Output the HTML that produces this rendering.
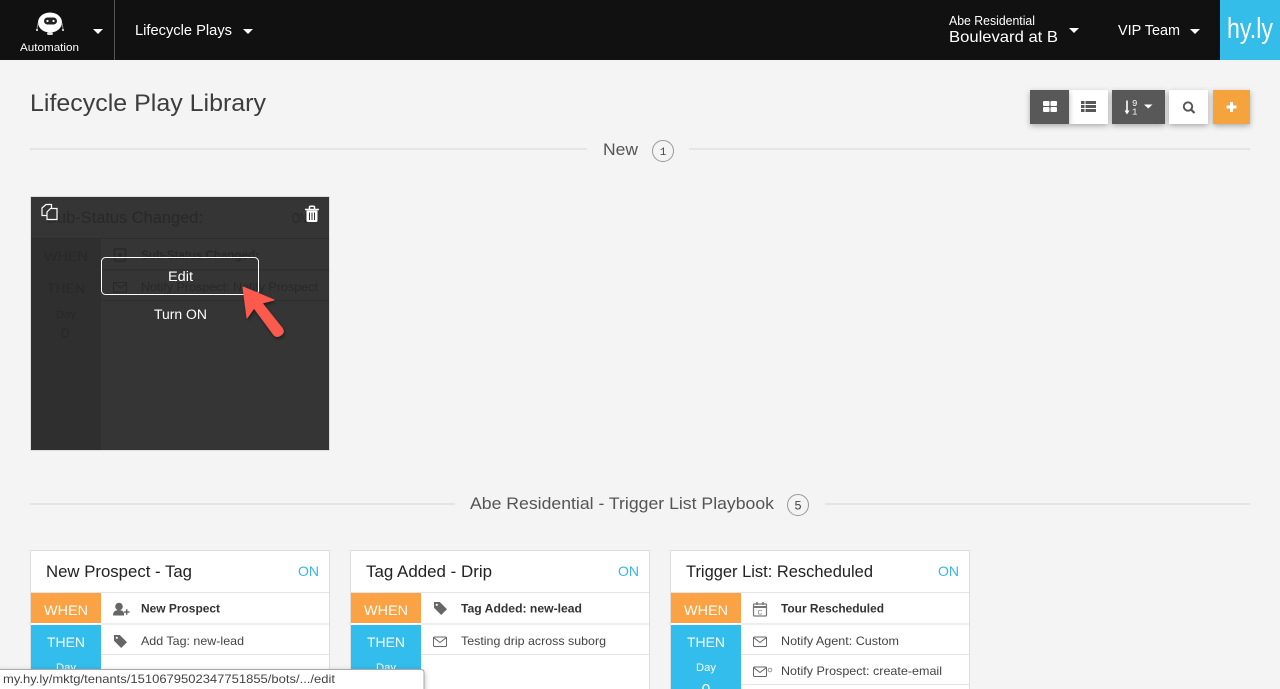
<!DOCTYPE html>
<html lang="en">
<head>
<meta charset="utf-8">
<title>Lifecycle Play Library</title>
<style>
html,body{margin:0;padding:0;background:#f4f4f4;width:1280px;height:689px;overflow:hidden}
svg{display:block}
text{font-family:"Liberation Sans",sans-serif}
</style>
</head>
<body>
<svg width="1280" height="689" viewBox="0 0 1280 689" xmlns="http://www.w3.org/2000/svg">
<defs>
<filter id="sh" x="-30%" y="-30%" width="160%" height="170%"><feDropShadow dx="0" dy="2" stdDeviation="3" flood-color="#000" flood-opacity=".3"/></filter>
<filter id="ash" x="-30%" y="-30%" width="160%" height="160%"><feDropShadow dx="1" dy="2" stdDeviation="1.5" flood-color="#000" flood-opacity=".45"/></filter>
<g id="mail" fill="none" stroke="#666" stroke-width="1"><rect x=".5" y=".5" width="13" height="9.500" rx="1"/><path d="M.8 1.200 7 6 13.200 1.200"/></g>
<path id="tag" fill="#666" d="M0 0H5.800L13 7.200 7.200 13 0 5.800ZM2.800 1.700a1.100 1.100 0 1 0 .01 0Z"/>
</defs>

<rect width="1280" height="689" fill="#f4f4f4"/>

<!-- Top bar -->
<rect width="1280" height="60" fill="#111"/>
<rect x="114" y="0" width="1" height="60" fill="#555"/>
<rect x="1220" y="0" width="60" height="60" fill="#35bdea"/>

<!-- Robot -->
<ellipse cx="50" cy="22.500" rx="12" ry="10" fill="#fff"/>
<rect x="44" y="17.500" width="13" height="7" rx="3.500" fill="#222"/>
<circle cx="47.500" cy="21" r="1.100" fill="#fff"/><circle cx="53.500" cy="21" r="1.100" fill="#fff"/>
<rect x="47" y="32.500" width="6" height="2.500" rx="1.200" fill="#ddd"/>
<path d="M38 23 37 29M62 23 63 29" stroke="#888" fill="none"/>
<circle cx="37" cy="30" r="1" fill="#fff"/><circle cx="63" cy="30" r="1" fill="#fff"/>
<text x="20" y="51" font-size="11" fill="#fff" textLength="59" lengthAdjust="spacingAndGlyphs">Automation</text>
<path d="M93 29h10l-5 5z" fill="#fff"/>

<text x="135" y="35" font-size="14.500" fill="#fff" textLength="97" lengthAdjust="spacingAndGlyphs">Lifecycle Plays</text>
<path d="M243 29h10l-5 5z" fill="#fff"/>

<text x="949" y="25" font-size="12.500" fill="#fff" textLength="86" lengthAdjust="spacingAndGlyphs">Abe Residential</text>
<text x="949" y="42" font-size="16" fill="#fff" textLength="109" lengthAdjust="spacingAndGlyphs">Boulevard at B</text>
<path d="M1069 28h10l-5 5z" fill="#fff"/>
<text x="1118" y="35" font-size="14.500" fill="#fff" textLength="62" lengthAdjust="spacingAndGlyphs">VIP Team</text>
<path d="M1190 29h10l-5 5z" fill="#fff"/>
<text x="1227" y="38" font-size="29" fill="#fff" textLength="46" lengthAdjust="spacingAndGlyphs">hy.ly</text>

<!-- Title -->
<text x="30" y="111" font-size="24" fill="#3d3d3d" textLength="236" lengthAdjust="spacingAndGlyphs">Lifecycle Play Library</text>

<!-- Toolbar -->
<g filter="url(#sh)"><rect x="1069" y="90" width="39" height="34" fill="#fff"/></g>
<g filter="url(#sh)"><rect x="1030" y="90" width="39" height="34" fill="#585858"/></g>
<g filter="url(#sh)"><rect x="1112" y="90" width="53" height="34" fill="#585858"/></g>
<g filter="url(#sh)"><rect x="1169" y="90" width="39" height="34" fill="#fff"/></g>
<g filter="url(#sh)"><rect x="1213" y="90" width="37" height="34" fill="#f4a33d"/></g>
<g fill="#fff"><rect x="1043" y="101" width="6.500" height="5" rx="1"/><rect x="1050.500" y="101" width="6.500" height="5" rx="1"/><rect x="1043" y="107" width="6.500" height="5" rx="1"/><rect x="1050.500" y="107" width="6.500" height="5" rx="1"/></g>
<g fill="#585858"><rect x="1081" y="101" width="3.500" height="3" /><rect x="1085.500" y="101" width="10.500" height="3"/><rect x="1081" y="105" width="3.500" height="3"/><rect x="1085.500" y="105" width="10.500" height="3"/><rect x="1081" y="109" width="3.500" height="3"/><rect x="1085.500" y="109" width="10.500" height="3"/></g>
<path d="M1127 100.500v11" stroke="#fff" stroke-width="1.600" fill="none"/><path d="M1124.500 110.500h5l-2.500 4z" fill="#fff"/>
<text x="1132" y="106" font-size="9" fill="#fff" style="font-family:'Liberation Mono',monospace">9</text>
<text x="1132" y="114.500" font-size="9" fill="#fff" style="font-family:'Liberation Mono',monospace">1</text>
<path d="M1144 104.500h8.500l-4.250 4z" fill="#fff"/>
<circle cx="1188" cy="106.500" r="4.200" fill="none" stroke="#555" stroke-width="1.900"/><path d="M1191 109.500l3.500 3.500" stroke="#555" stroke-width="2.200"/>
<path d="M1231.500 102v10M1226.500 107h10" stroke="#fff" stroke-width="3"/>

<!-- Section: New -->
<rect x="30" y="148" width="557" height="2" fill="#e3e5e8"/>
<rect x="689" y="148" width="561" height="2" fill="#e3e5e8"/>
<text x="603" y="155" font-size="16.500" fill="#555" textLength="35" lengthAdjust="spacingAndGlyphs">New</text>
<circle cx="663" cy="151" r="10.500" fill="none" stroke="#999"/>
<text x="663" y="155" font-size="11" fill="#444" text-anchor="middle" style="font-family:'Liberation Mono',monospace">1</text>

<!-- Hovered card -->
<rect x="30.500" y="196.500" width="299" height="254" fill="#353535" stroke="#ddd"/>
<rect x="31" y="238" width="70" height="212" fill="#2f2f2f"/>
<rect x="31" y="238" width="298" height="1" fill="#2d2d2d"/>
<rect x="101" y="269" width="228" height="1.500" fill="#2e2e2e"/>
<rect x="101" y="300" width="228" height="1" fill="#2e2e2e"/>
<g fill="#282828">
<text x="46" y="223" font-size="16.500" textLength="157" lengthAdjust="spacingAndGlyphs">Sub-Status Changed:</text>
<text x="292" y="223" font-size="15" textLength="15" lengthAdjust="spacingAndGlyphs">ON</text>
<text x="44" y="261" font-size="14" textLength="44" lengthAdjust="spacingAndGlyphs">WHEN</text>
<text x="47" y="293" font-size="14" textLength="38" lengthAdjust="spacingAndGlyphs">THEN</text>
<text x="56" y="318" font-size="11" textLength="20" lengthAdjust="spacingAndGlyphs">Day</text>
<text x="61" y="338" font-size="15">0</text>
<text x="141" y="259" font-size="12" font-weight="bold" textLength="118" lengthAdjust="spacingAndGlyphs">Sub-Status Changed:</text>
<text x="141" y="291" font-size="12" textLength="177" lengthAdjust="spacingAndGlyphs">Notify Prospect: Notify Prospect</text>
</g>
<rect x="114.500" y="249" width="11" height="12" rx="1" fill="none" stroke="#282828" stroke-width="1.400"/><circle cx="120" cy="255" r="2" fill="#282828"/>
<rect x="113.500" y="282.500" width="13" height="9.500" fill="none" stroke="#282828"/><path d="M114 283l6.500 5 6.500-5" fill="none" stroke="#282828"/>

<!-- Copy icon -->
<path d="M42 208 46 204.500h5.500v11H42z" fill="none" stroke="#fff" stroke-width="1.200"/>
<path d="M47 212 50.500 208.500H57v11H47z" fill="#353535" stroke="#fff" stroke-width="1.200"/>
<!-- Trash icon -->
<path d="M305 209.500h14M309.500 209v-1.800q0-1 1-1h3q1 0 1 1v1.800" fill="none" stroke="#fff" stroke-width="1.500"/>
<path d="M306.500 210.500h11v10q0 1.500-1.500 1.500h-8q-1.500 0-1.500-1.500z" fill="#fff"/>
<path d="M309.500 212.500v7.500M312 212.500v7.500M314.500 212.500v7.500" stroke="#353535" stroke-width="1"/>

<rect x="101.500" y="257.500" width="157" height="37" rx="4" fill="none" stroke="#fff"/>
<text x="168" y="281" font-size="13.500" fill="#fff" textLength="25" lengthAdjust="spacingAndGlyphs">Edit</text>
<text x="154" y="319" font-size="13.500" fill="#fff" textLength="53" lengthAdjust="spacingAndGlyphs">Turn ON</text>

<!-- Arrow -->
<path filter="url(#ash)" fill="#fb5a4e" d="M243 287 274 300 262 303 282 328Q285 332 281 335 277 338 274 335L254 308 247 318Z" stroke="#fb5a4e" stroke-linejoin="round"/>

<!-- Section: Playbook -->
<rect x="30" y="503" width="425" height="2" fill="#e3e5e8"/>
<rect x="825" y="503" width="425" height="2" fill="#e3e5e8"/>
<text x="470" y="509" font-size="16.500" fill="#555" textLength="304" lengthAdjust="spacingAndGlyphs">Abe Residential - Trigger List Playbook</text>
<circle cx="798" cy="505" r="10.500" fill="none" stroke="#999"/>
<text x="798" y="509.500" font-size="12.500" fill="#444" text-anchor="middle" style="font-family:'Liberation Mono',monospace">5</text>

<!-- Card 1 -->
<g>
<rect x="30.500" y="550.500" width="299" height="150" fill="#fff" stroke="#ddd"/>
<rect x="31" y="592" width="298" height="1" fill="#e5e5e5"/>
<rect x="31" y="593" width="70" height="30" fill="#fba344"/>
<rect x="31" y="625" width="70" height="70" fill="#33bdec"/>
<rect x="101" y="623" width="228" height="2" fill="#eee"/>
<rect x="101" y="654" width="228" height="1" fill="#e5e5e5"/>
<text x="46" y="577" font-size="16.500" fill="#222" textLength="146" lengthAdjust="spacingAndGlyphs">New Prospect - Tag</text>
<text x="298" y="576" font-size="14" fill="#38b6e8" textLength="21" lengthAdjust="spacingAndGlyphs">ON</text>
<text x="44" y="615" font-size="14" fill="#fff" textLength="44" lengthAdjust="spacingAndGlyphs">WHEN</text>
<text x="47" y="647" font-size="14" fill="#fff" textLength="38" lengthAdjust="spacingAndGlyphs">THEN</text>
<text x="56" y="671" font-size="11" fill="#fff" textLength="20" lengthAdjust="spacingAndGlyphs">Day</text>
<text x="141" y="612.500" font-size="12" font-weight="bold" fill="#333" textLength="79" lengthAdjust="spacingAndGlyphs">New Prospect</text>
<text x="141" y="645" font-size="12" fill="#444" textLength="103" lengthAdjust="spacingAndGlyphs">Add Tag: new-lead</text>
<circle cx="119" cy="606.500" r="3.800" fill="#666"/><path d="M113 615.500q0-5.500 6-5.500 4 0 5 3v2.500z" fill="#666"/>
<path d="M124 612h5.500M126.700 609.300v5.400" stroke="#666" stroke-width="1.500"/>
<use href="#tag" x="114" y="635"/>
</g>

<!-- Card 2 -->
<g>
<rect x="350.500" y="550.500" width="299" height="150" fill="#fff" stroke="#ddd"/>
<rect x="351" y="592" width="298" height="1" fill="#e5e5e5"/>
<rect x="351" y="593" width="70" height="30" fill="#fba344"/>
<rect x="351" y="625" width="70" height="70" fill="#33bdec"/>
<rect x="421" y="623" width="228" height="2" fill="#eee"/>
<rect x="421" y="654" width="228" height="1" fill="#e5e5e5"/>
<text x="366" y="577" font-size="16.500" fill="#222" textLength="126" lengthAdjust="spacingAndGlyphs">Tag Added - Drip</text>
<text x="618" y="576" font-size="14" fill="#38b6e8" textLength="21" lengthAdjust="spacingAndGlyphs">ON</text>
<text x="364" y="615" font-size="14" fill="#fff" textLength="44" lengthAdjust="spacingAndGlyphs">WHEN</text>
<text x="367" y="647" font-size="14" fill="#fff" textLength="38" lengthAdjust="spacingAndGlyphs">THEN</text>
<text x="376" y="671" font-size="11" fill="#fff" textLength="20" lengthAdjust="spacingAndGlyphs">Day</text>
<text x="461" y="612.500" font-size="12" font-weight="bold" fill="#333" textLength="121" lengthAdjust="spacingAndGlyphs">Tag Added: new-lead</text>
<text x="461" y="645" font-size="12" fill="#444" textLength="145" lengthAdjust="spacingAndGlyphs">Testing drip across suborg</text>
<use href="#tag" x="434" y="602"/>
<use href="#mail" x="433" y="636.500"/>
</g>

<!-- Card 3 -->
<g>
<rect x="670.500" y="550.500" width="299" height="150" fill="#fff" stroke="#ddd"/>
<rect x="671" y="592" width="298" height="1" fill="#e5e5e5"/>
<rect x="671" y="593" width="70" height="30" fill="#fba344"/>
<rect x="671" y="625" width="70" height="70" fill="#33bdec"/>
<rect x="741" y="623" width="228" height="2" fill="#eee"/>
<rect x="741" y="654" width="228" height="1" fill="#e5e5e5"/>
<rect x="741" y="684" width="228" height="1" fill="#e5e5e5"/>
<text x="686" y="577" font-size="16.500" fill="#222" textLength="187" lengthAdjust="spacingAndGlyphs">Trigger List: Rescheduled</text>
<text x="938" y="576" font-size="14" fill="#38b6e8" textLength="21" lengthAdjust="spacingAndGlyphs">ON</text>
<text x="684" y="615" font-size="14" fill="#fff" textLength="44" lengthAdjust="spacingAndGlyphs">WHEN</text>
<text x="687" y="647" font-size="14" fill="#fff" textLength="38" lengthAdjust="spacingAndGlyphs">THEN</text>
<text x="696" y="671" font-size="11" fill="#fff" textLength="20" lengthAdjust="spacingAndGlyphs">Day</text>
<text x="706" y="695" font-size="16" fill="#fff" text-anchor="middle">0</text>
<text x="781" y="612.500" font-size="12" font-weight="bold" fill="#333" textLength="103" lengthAdjust="spacingAndGlyphs">Tour Rescheduled</text>
<text x="781" y="645" font-size="12" fill="#444" textLength="118" lengthAdjust="spacingAndGlyphs">Notify Agent: Custom</text>
<text x="781" y="675" font-size="12" fill="#444" textLength="161" lengthAdjust="spacingAndGlyphs">Notify Prospect: create-email</text>
<rect x="753.500" y="604" width="13" height="12" rx="1" fill="none" stroke="#777" stroke-width="1.200"/>
<path d="M754 607h12" stroke="#777" stroke-width="2"/><path d="M757 602v3M763 602v3" stroke="#777" stroke-width="1.500"/>
<text x="760" y="614.500" font-size="6.500" fill="#666" text-anchor="middle">C</text>
<use href="#mail" x="753" y="636.500"/>
<use href="#mail" x="753" y="666.500"/>
<circle cx="770" cy="670" r="1.800" fill="none" stroke="#999"/>
</g>

<!-- Status tooltip -->
<path d="M-2 669.500H421q3 0 3 3V691H-2Z" fill="#fff" stroke="#aaa" filter="url(#sh)"/>
<text x="3" y="683" font-size="12" fill="#444" textLength="332" lengthAdjust="spacingAndGlyphs">my.hy.ly/mktg/tenants/1510679502347751855/bots/.../edit</text>
</svg>
</body>
</html>
